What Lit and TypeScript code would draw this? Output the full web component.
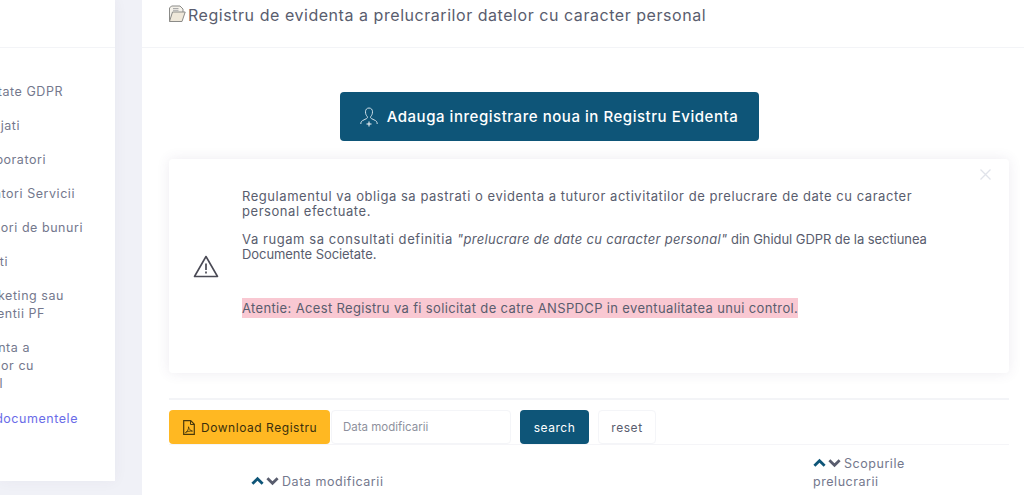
import { LitElement, html, css } from 'lit';
import { customElement } from 'lit/decorators.js';

// the window is scrolled sideways, so the menu labels are cut by the left edge.
// end = x where the label stops in the window
const MENU = [
  { text: 'Date Societate GDPR', end: 63 },
  { text: 'Angajati', end: 20 },
  { text: 'Colaboratori', end: 46 },
  { text: 'Prestatori Servicii', end: 75 },
  { text: 'Furnizori de bunuri', end: 83 },
  { text: 'Clienti', end: 8 },
  { text: 'Marketing sau', end: 64, tight: true },
  { text: 'Clientii PF', end: 45 },
  { text: 'Registru Evidenta a', end: 30, tight: true },
  { text: 'Datelor cu', end: 34, tight: true },
  { text: 'Personal', end: 3 },
];

const chevrons = html`<svg class="chev up" viewBox="0 0 14 10"><path d="M1.500 8 7 2.500 12.500 8" /></svg><svg class="chev down" viewBox="0 0 14 10"><path d="M1.500 2 7 7.500 12.500 2" /></svg>`;

@customElement('app-root')
export class AppRoot extends LitElement {
  static styles = css`
    :host {
      display: block;
      height: 495px;
      overflow: hidden;
      background: #f0f1f7;
      font-family: Inter, 'Open Sans', sans-serif;
      letter-spacing: 0.034em;
      color: #595d6e;
    }

    .page {
      display: flex;
      height: 495px;
    }

    .sidebar {
      width: 115px;
      height: 481px;
      flex: none;
      overflow: hidden;
      background: #fff;
      box-shadow: 0 0 13px rgba(82, 63, 105, 0.05);
    }

    .side-head {
      height: 47px;
      border-bottom: 1px solid #f3f4f7;
    }

    .menu {
      margin-top: 35px;
      font-size: 12.5px;
      line-height: 18px;
      color: #74788d;
    }

    .line {
      display: flex;
      justify-content: flex-end;
      margin-bottom: 16px;
      white-space: nowrap;
    }

    .line.tight {
      margin-bottom: 0;
    }

    .line.active {
      margin-top: 17px;
      color: #6a6ce8;
    }

    .main {
      margin-left: 27px;
      flex: 1;
      background: #fff;
      padding: 0 15px 0 27px;
      min-width: 0;
    }

    .title {
      height: 47px;
      margin: 0 -15px 0 -27px;
      padding-left: 26px;
      display: flex;
      align-items: flex-start;
      gap: 2px;
      border-bottom: 1px solid #f3f4f7;
      font-size: 16px;
      line-height: 30px;
    }

    .title svg {
      width: 18px;
      height: 18px;
      margin-top: 5px;
      flex: none;
    }

    .cta-row {
      display: flex;
      justify-content: center;
      padding: 44px 80px 0 0;
    }

    .cta {
      display: flex;
      align-items: center;
      justify-content: center;
      gap: 9px;
      width: 419px;
      height: 49px;
      background: #0e5578;
      border-radius: 4px;
      color: #fff;
      font-size: 15px;
      font-weight: 500;
    }

    .cta svg {
      width: 18px;
      height: 20px;
    }

    .alert {
      position: relative;
      display: flex;
      align-items: center;
      height: 214px;
      margin-top: 18px;
      border-radius: 4px;
      background: #fff;
      box-shadow: 0 0 13px rgba(82, 63, 105, 0.1);
      font-size: 13px;
      line-height: 15px;
    }

    .alert-icon {
      width: 26px;
      height: 24px;
      margin: 0 23px 0 24px;
      flex: none;
    }

    .alert-text {
      width: 722px;
      padding-bottom: 28px;
    }

    .alert-text p {
      margin: 0 0 13px;
    }

    .second .lead {
      letter-spacing: 0.044em;
    }

    .second i {
      letter-spacing: 0.024em;
    }

    .second .tail {
      letter-spacing: -0.005em;
    }

    .alert-text .warn {
      margin: 39px 0 0;
      letter-spacing: 0.027em;
    }

    .warn span {
      background: #f9c8d2;
      padding: 2px 0;
    }

    .close {
      position: absolute;
      top: 10px;
      right: 18px;
      width: 11px;
      height: 11px;
      stroke: #e0e3ea;
      stroke-width: 1.300;
    }

    .tools {
      margin-top: 25px;
      border-top: 2px solid #f3f4f7;
      padding-top: 10px;
      display: flex;
      align-items: stretch;
      height: 34px;
      font-size: 12px;
    }

    .dl {
      width: 161px;
      display: flex;
      align-items: center;
      gap: 6px;
      padding-left: 14px;
      box-sizing: border-box;
      background: #ffb822;
      border-radius: 4px;
      color: #3b2f0c;
    }

    .dl svg {
      width: 12px;
      height: 15px;
    }

    .search-input {
      width: 180px;
      margin-left: 1px;
      padding-left: 11px;
      box-sizing: border-box;
      display: flex;
      align-items: center;
      border: 1px solid #f4f5f8;
      border-radius: 4px;
      font-size: 11.5px;
      letter-spacing: 0;
      color: #8e919d;
    }

    .btn {
      margin-left: 9px;
      display: flex;
      align-items: center;
      justify-content: center;
      border-radius: 4px;
      box-sizing: border-box;
    }

    .btn.search {
      width: 69px;
      background: #0e5578;
      color: #fff;
    }

    .btn.reset {
      width: 58px;
      border: 1px solid #f4f5f8;
    }

    .thead {
      border-top: 1px solid #f5f5f8;
      display: grid;
      grid-template-columns: 644px 1fr;
      padding-top: 10px;
      font-size: 12.5px;
      line-height: 18px;
      color: #74788d;
    }

    .thead > div:first-child {
      padding: 18px 0 0 82px;
    }

    .chev {
      width: 13px;
      height: 10px;
      margin-right: 2px;
      fill: none;
      stroke-width: 3;
    }

    .chev.down {
      margin-right: 3px;
      stroke: #595d6e;
    }

    .chev.up {
      stroke: #0e5578;
    }
  `;

  render() {
    return html`
      <div class="page">
        <aside class="sidebar">
          <div class="side-head"></div>
          <nav class="menu">
            ${MENU.map(
              (m) => html`<div class="line ${m.tight ? 'tight' : ''}" style="width:${m.end}px">${m.text}</div>`
            )}
            <div class="line active" style="width:78px">Toate documentele</div>
          </nav>
        </aside>
        <main class="main">
          <div class="title">
            <svg viewBox="0 0 18 18" fill="none" stroke="#8b8b88" stroke-width="1">
              <path d="M1.500 16.500V3L3.500 1h8.500L15 4v3" fill="#f4f1ea" />
              <path d="M5 3.500h5.500M5 5.300h5.500" stroke="#aaa" />
              <path d="M1.500 16.500h12.500l3.200-9.500H4.500l-3 9.500Z" fill="#efe8da" />
            </svg>
            Registru de evidenta a prelucrarilor datelor cu caracter personal
          </div>
          <div class="cta-row">
            <div class="cta">
              <svg viewBox="0 0 18 20" fill="none" stroke="#cfe0e9" stroke-width="1">
                <path d="M9 1C6.800 1 5.500 2.600 5.500 4.800c0 2.200.8 3.700 1.700 4.700.5.600.3 1.600-.5 2L2.500 13.600C1.300 14.300.8 15.300.8 17" />
                <path d="M9 1c2.200 0 3.500 1.600 3.500 3.800 0 2.200-.8 3.700-1.700 4.700-.5.600-.3 1.600.5 2l4.200 2.100c1.200.7 1.700 1.700 1.700 3.400" />
                <path d="M9 14.500v5M6.500 17h5" stroke="#fff" />
              </svg>
              Adauga inregistrare noua in Registru Evidenta
            </div>
          </div>
          <section class="alert">
            <svg class="alert-icon" viewBox="0 0 26 24" fill="none" stroke="#4a4a55" stroke-width="1.600">
              <path d="M13 2.500 1.500 22.500h23L13 2.500Z" stroke-linejoin="round" />
              <path d="M13 9.500v6.500M13 17.500v2" stroke-width="1.700" />
            </svg>
            <div class="alert-text">
              <p>Regulamentul va obliga sa pastrati o evidenta a tuturor activitatilor de prelucrare de date cu caracter personal efectuate.</p>
              <p class="second"><span class="lead">Va rugam sa consultati definitia </span><i>"prelucrare de date cu caracter personal"</i><span class="tail"> din Ghidul GDPR de la sectiunea Documente Societate.</span></p>
              <p class="warn"><span>Atentie: Acest Registru va fi solicitat de catre ANSPDCP in eventualitatea unui control.</span></p>
            </div>
            <svg class="close" viewBox="0 0 11 11"><path d="M.5.500l10 10M10.500.500l-10 10" /></svg>
          </section>
          <div class="tools">
            <div class="dl">
              <svg viewBox="0 0 12 15" fill="none" stroke="#4a3a0c" stroke-width="1.200">
                <path d="M.7.700h7l3.600 3.600v10H.7V.700Z" />
                <path d="M7.500.700v3.800h3.800" stroke-width="1" />
                <path d="M2.500 12.500c2-1 3.300-3.500 3-5.700.4 2.200 1.700 3.800 4 4.300-2.500-.2-5 .2-7 1.400Z" stroke-width=".9" />
              </svg>
              Download Registru
            </div>
            <div class="search-input">Data modificarii</div>
            <div class="btn search">search</div>
            <div class="btn reset">reset</div>
          </div>
          <div class="thead">
            <div>${chevrons}Data modificarii</div>
            <div>${chevrons}Scopurile<br />prelucrarii</div>
          </div>
        </main>
      </div>
    `;
  }
}
